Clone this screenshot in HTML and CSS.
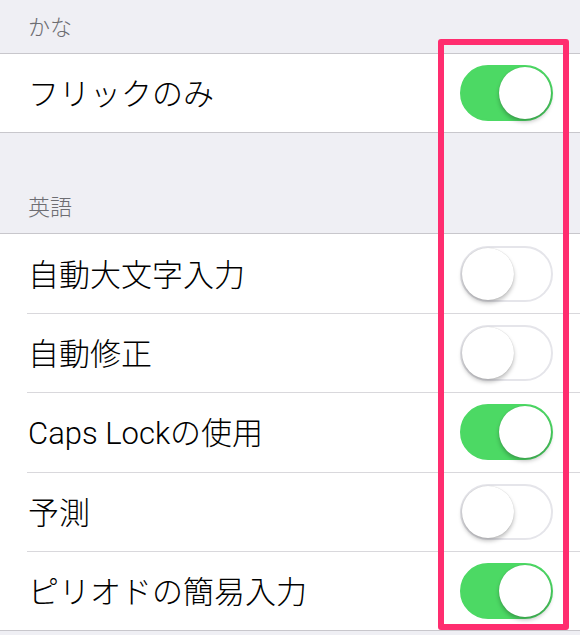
FILE: index.html
```html
<!DOCTYPE html>
<html lang="ja">
<head>
<meta charset="UTF-8">
<meta name="viewport" content="width=device-width, initial-scale=1.0">
<title>キーボード</title>
<link rel="stylesheet" href="styles.css">
</head>
<body>
    <div class="settings">
        <div class="section-header first">かな</div>
        <div class="group">
            <div class="row">
                <span class="label">フリックのみ</span>
                <span class="switch on"><span class="knob"></span></span>
            </div>
        </div>

        <div class="section-header">英語</div>
        <div class="group">
            <div class="row">
                <span class="label">自動大文字入力</span>
                <span class="switch"><span class="knob"></span></span>
            </div>
            <div class="row">
                <span class="label">自動修正</span>
                <span class="switch"><span class="knob"></span></span>
            </div>
            <div class="row">
                <span class="label">Caps Lockの使用</span>
                <span class="switch on"><span class="knob"></span></span>
            </div>
            <div class="row">
                <span class="label">予測</span>
                <span class="switch"><span class="knob"></span></span>
            </div>
            <div class="row">
                <span class="label">ピリオドの簡易入力</span>
                <span class="switch on"><span class="knob"></span></span>
            </div>
        </div>

        <!-- 注目マーク -->
        <div class="highlight"></div>
    </div>
</body>
</html>
```

FILE: styles.css
```css
body {
    margin: 0;
    background: #efeff4;
    font-family: "Liberation Sans", "Noto Sans CJK JP", sans-serif;
    color: #000;
}
.settings {
    position: relative;
    min-height: 635px;
}
.section-header {
    height: 100px;
    box-sizing: border-box;
    padding: 0 28px 12px;
    display: flex;
    align-items: flex-end;
    font-size: 22px;
    font-weight: 300;
    color: #6d6d72;
}
.section-header.first {
    height: 53px;
}
.group {
    background: #fff;
    border-top: 1px solid #c8c7cc;
    border-bottom: 1px solid #c8c7cc;
}
.row {
    height: 78.4px;
    margin-left: 27px;
    padding-right: 27px;
    display: flex;
    align-items: center;
    justify-content: space-between;
    border-bottom: 1px solid #d9d8dc;
}
.row:last-child {
    border-bottom: none;
}
.label {
    font-family: Roboto, "Noto Sans CJK JP", sans-serif;
    font-size: 31px;
    font-weight: 300;
    margin-left: 1px;
    margin-top: -3px;
}
.switch {
    position: relative;
    width: 93px;
    height: 56px;
    box-sizing: border-box;
    border-radius: 28px;
    border: 2px solid #e5e5ea;
    background: #fff;
}
.switch.on {
    background: #4cd964;
    border-color: #4cd964;
}
.knob {
    position: absolute;
    top: 0;
    left: 0;
    width: 52px;
    height: 52px;
    border-radius: 50%;
    background: #fff;
    box-shadow: 0 3px 4px rgba(0, 0, 0, 0.25), 0 0 1px rgba(0, 0, 0, 0.2);
}
.switch.on .knob {
    left: auto;
    right: 0;
}
.highlight {
    position: absolute;
    left: 438px;
    top: 39px;
    width: 131px;
    height: 591px;
    box-sizing: border-box;
    border: 6px solid #ff2d6f;
    border-radius: 3px;
}
```
